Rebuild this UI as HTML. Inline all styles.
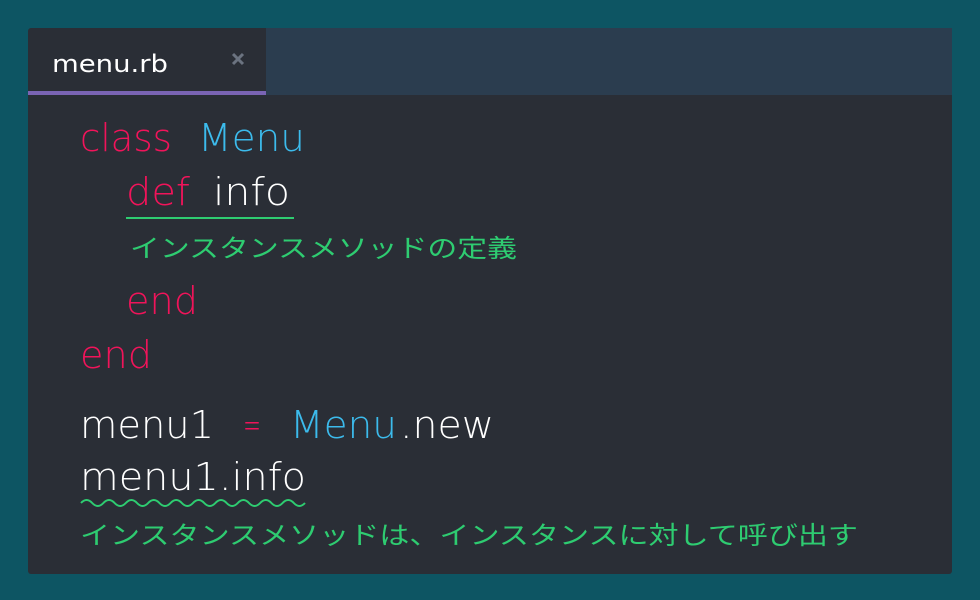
<!DOCTYPE html>
<html><head><meta charset="utf-8"><style>
html,body{margin:0;padding:0;background:#0d5563;width:980px;height:600px;overflow:hidden}
svg{display:block}
text{font-family:"DejaVu Sans","Liberation Sans","Noto Sans CJK JP",sans-serif;font-weight:200}
.j{font-family:"Liberation Sans","Noto Sans CJK JP",sans-serif;font-weight:400}
</style></head><body>
<svg width="980" height="600" xmlns="http://www.w3.org/2000/svg">
<rect width="980" height="600" fill="#0d5563"/>
<rect x="28" y="28" width="924" height="546" rx="3" fill="#2a2e36"/>
<rect x="266" y="28" width="686" height="67" fill="#2b3d4f"/>
<rect x="28" y="91" width="238" height="4" fill="#7a64b4"/>
<text x="52" y="72" font-size="24" fill="#fff" style="font-weight:400" textLength="116" lengthAdjust="spacingAndGlyphs">menu.rb</text>
<path d="M233 54l10 10M243 54l-10 10" stroke="#6b7380" stroke-width="3"/>
<g font-size="38">
<text x="80" y="151" fill="#f0145a" textLength="92" lengthAdjust="spacingAndGlyphs">class</text>
<text x="198" y="151" fill="#3cbbec" textLength="107" lengthAdjust="spacingAndGlyphs">Menu</text>
<text x="126" y="205" fill="#f0145a" textLength="64" lengthAdjust="spacingAndGlyphs">def</text>
<text x="213" y="205" fill="#fff" textLength="77" lengthAdjust="spacingAndGlyphs">info</text>
<text x="126" y="314" fill="#f0145a" textLength="72" lengthAdjust="spacingAndGlyphs">end</text>
<text x="80" y="368" fill="#f0145a" textLength="72" lengthAdjust="spacingAndGlyphs">end</text>
<text x="80" y="438" fill="#fff" textLength="134" lengthAdjust="spacingAndGlyphs">menu1</text>
<text x="243" y="438" fill="#f0145a" textLength="18" lengthAdjust="spacingAndGlyphs">=</text>
<text x="290" y="438" fill="#3cbbec" textLength="107" lengthAdjust="spacingAndGlyphs">Menu</text>
<text x="400" y="438" fill="#fff" textLength="94" lengthAdjust="spacingAndGlyphs">.new</text>
<text x="80" y="490" fill="#fff" textLength="226" lengthAdjust="spacingAndGlyphs">menu1.info</text>
</g>
<rect x="126" y="217" width="168" height="2" fill="#2ecc71"/>
<path d="M81 503 q5.6 -6 11.2 0 t11.2 0 t11.2 0 t11.2 0 t11.2 0 t11.2 0 t11.2 0 t11.2 0 t11.2 0 t11.2 0 t11.2 0 t11.2 0 t11.2 0 t11.2 0 t11.2 0 t11.2 0 t11.2 0 t11.2 0 t11.2 0 t11.2 0" fill="none" stroke="#2ecc71" stroke-width="2"/>
<text class="j" x="130" y="257" font-size="25" fill="#2ecc71" textLength="387" lengthAdjust="spacingAndGlyphs">インスタンスメソッドの定義</text>
<text class="j" x="80" y="544" font-size="25" fill="#2ecc71" textLength="778" lengthAdjust="spacingAndGlyphs">インスタンスメソッドは、インスタンスに対して呼び出す</text>
</svg>
</body></html>
